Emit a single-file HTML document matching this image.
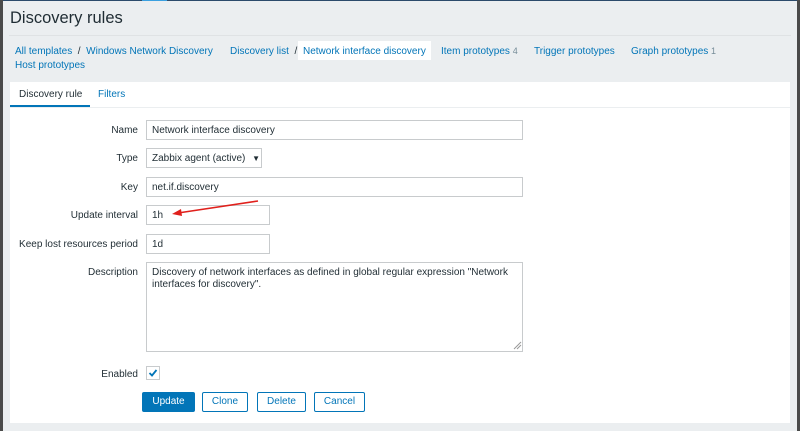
<!DOCTYPE html>
<html><head><meta charset="utf-8"><style>
*{box-sizing:border-box;margin:0;padding:0}
body{width:800px;height:431px;background:#ebeef0;font-family:"Liberation Sans",Arial,sans-serif;font-size:10px;color:#1f2c33;position:relative;overflow:hidden}
.a{position:absolute}
.lnk{color:#0275b8;white-space:nowrap}
.lbl{position:absolute;right:662px;text-align:right;white-space:nowrap;color:#1f2c33}
.in{position:absolute;left:146px;border:1px solid #c8cbcd;background:#fff;height:20px;padding:4px 5px;white-space:nowrap}
.btn{position:absolute;top:392px;height:20px;border:1px solid #0275b8;color:#0275b8;background:#fff;text-align:center;line-height:18px;border-radius:2px}
</style></head><body>
<div class="a" style="left:0;top:0;width:800px;height:1px;background:#2b4a6b"></div>
<div class="a" style="left:142px;top:0;width:25px;height:1px;background:#3aa0e0"></div>
<div class="a" style="left:0;top:0;width:3px;height:431px;background:#4a4a4a"></div>
<div class="a" style="left:797px;top:0;width:3px;height:431px;background:#4a4a4a"></div>
<div class="a" style="left:10px;top:9px;font-size:16.5px;color:#1f2c33">Discovery rules</div>
<div class="a" style="left:9px;top:35px;width:782px;height:1px;background:#dfe2e4"></div>
<div class="a lnk" style="left:15px;top:46px">All templates <span style="color:#1f2c33">&nbsp;/&nbsp;</span> Windows Network Discovery</div>
<div class="a lnk" style="left:230px;top:46px">Discovery list <span style="color:#1f2c33">&nbsp;/</span></div>
<div class="a lnk" style="left:298px;top:41px;width:133px;height:19px;background:#fff;padding:5px 5px">Network interface discovery</div>
<div class="a lnk" style="left:441px;top:46px">Item prototypes <span style="color:#768d99;font-size:9px">4</span></div>
<div class="a lnk" style="left:534px;top:46px">Trigger prototypes</div>
<div class="a lnk" style="left:631px;top:46px">Graph prototypes <span style="color:#768d99;font-size:9px">1</span></div>
<div class="a lnk" style="left:15px;top:60px">Host prototypes</div>
<div class="a" style="left:10px;top:82px;width:780px;height:341px;background:#fff"></div>
<div class="a" style="left:10px;top:107px;width:780px;height:1px;background:#ebeef0"></div>
<div class="a" style="left:19px;top:89px">Discovery rule</div>
<div class="a" style="left:10px;top:105px;width:80px;height:2px;background:#0275b8"></div>
<div class="a lnk" style="left:98px;top:89px">Filters</div>
<div class="lbl" style="top:125px">Name</div>
<div class="in" style="top:120px;width:377px">Network interface discovery</div>
<div class="lbl" style="top:153px">Type</div>
<div class="in" style="top:148px;width:116px">Zabbix agent (active) <span style="font-size:8px;margin-left:4px">▼</span></div>
<div class="lbl" style="top:182px">Key</div>
<div class="in" style="top:177px;width:377px">net.if.discovery</div>
<div class="lbl" style="top:210px">Update interval</div>
<div class="in" style="top:205px;width:124px">1h</div>
<div class="lbl" style="top:239px">Keep lost resources period</div>
<div class="in" style="top:234px;width:124px">1d</div>
<div class="lbl" style="top:267px">Description</div>
<div class="in" style="top:262px;width:377px;height:90px;white-space:normal;line-height:12px">Discovery of network interfaces as defined in global regular expression "Network interfaces for discovery".</div>
<svg class="a" style="left:512px;top:340px" width="10" height="10"><path d="M2 9L9 2M5 9L9 5" stroke="#999" stroke-width="1"/></svg>
<svg class="a" style="left:168px;top:198px" width="92" height="22"><path d="M90 3L10 15" stroke="#e0201c" stroke-width="1.6"/><path d="M4 16L13 11L14 18Z" fill="#e0201c"/></svg>
<div class="lbl" style="top:369px">Enabled</div>
<div class="a" style="left:146px;top:366px;width:14px;height:14px;border:1px solid #c8cbcd"></div>
<svg class="a" style="left:148px;top:368px" width="10" height="10"><path d="M1.5 5L4 7.5L8.5 2" stroke="#0275b8" stroke-width="1.8" fill="none"/></svg>
<div class="btn" style="left:142px;width:53px;background:#0275b8;color:#fff">Update</div>
<div class="btn" style="left:202px;width:46px">Clone</div>
<div class="btn" style="left:257px;width:49px">Delete</div>
<div class="btn" style="left:314px;width:51px">Cancel</div>
</body></html>
